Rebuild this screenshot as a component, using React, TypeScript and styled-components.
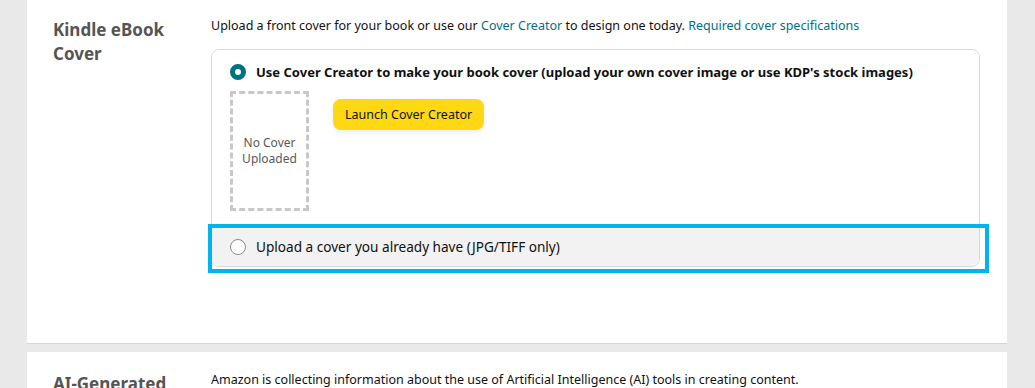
import React from 'react';
import styled, { createGlobalStyle } from 'styled-components';

const GlobalStyle = createGlobalStyle`
  html, body {
    margin: 0;
    padding: 0;
    background: #e9e9e9;
    font-family: "Noto Sans", "Open Sans", Arial, sans-serif;
    color: #0f1111;
  }
`;

const Page = styled.div`
  display: flex;
  flex-direction: column;
  gap: 8px;
  padding: 0 28px 0 27px;
  height: 388px;
  overflow: hidden;
`;

const Section = styled.section<{ $top: number; $height?: number }>`
  background: #fff;
  display: grid;
  grid-template-columns: 158px 1fr;
  padding: ${p => p.$top}px 27px 0 26px;
  border-bottom: 1px solid #d5d5d5;
  ${p => (p.$height ? `height: ${p.$height}px;` : '')}
  flex-shrink: 0;
  box-sizing: border-box;
`;

const Title = styled.h3`
  margin: 2px 0 0;
  font-size: 17px;
  line-height: 24px;
  font-weight: 700;
  color: #555;
`;

const Content = styled.div`
  display: flex;
  flex-direction: column;
`;

const Description = styled.p`
  margin: 0;
  font-size: 12.5px;
  line-height: 20px;
`;

const Link = styled.a`
  color: #007185;
  text-decoration: none;
`;

const OptionsBox = styled.div`
  margin-top: 13px;
  border: 1px solid #d5d9d9;
  border-radius: 8px;
  display: flex;
  flex-direction: column;
`;

const Option = styled.div<{ $muted?: boolean }>`
  position: relative;
  display: flex;
  flex-direction: column;
  padding: ${p => (p.$muted ? '8px 18px 9px' : '12px 18px 18px')};
  background: ${p => (p.$muted ? '#f2f2f2' : '#fff')};
  border-radius: ${p => (p.$muted ? '0 0 8px 8px' : '8px 8px 0 0')};
`;

const OptionLabel = styled.label<{ $bold?: boolean }>`
  display: flex;
  align-items: center;
  gap: 10px;
  font-size: ${p => (p.$bold ? '13px' : '13.6px')};
  line-height: 20px;
  font-weight: ${p => (p.$bold ? 700 : 400)};
`;

const Radio = styled.span<{ $checked?: boolean }>`
  width: 16px;
  height: 16px;
  box-sizing: border-box;
  border-radius: 50%;
  background: #fff;
  border: ${p => (p.$checked ? '5px solid #007185' : '1px solid #888c8c')};
  flex-shrink: 0;
`;

const CreatorRow = styled.div`
  display: flex;
  align-items: flex-start;
  gap: 24px;
  margin-top: 9px;
`;

const Placeholder = styled.div`
  width: 79px;
  height: 120px;
  box-sizing: border-box;
  border: 3px dashed #c8c8c8;
  display: flex;
  align-items: center;
  justify-content: center;
  text-align: center;
  font-size: 12px;
  line-height: 16px;
  color: #565959;
`;

const YellowButton = styled.button`
  margin-top: 8px;
  height: 31px;
  padding: 0 12px;
  background: #ffd814;
  border: none;
  border-radius: 8px;
  font-family: inherit;
  font-size: 12.5px;
  color: #0f1111;
  box-shadow: 0 2px 5px rgba(213, 217, 217, 0.5);
`;

const Highlight = styled.div`
  position: absolute;
  top: -5px;
  left: -4px;
  right: -10px;
  bottom: -7px;
  border: 4px solid #00b4f0;
  pointer-events: none;
`;

export default function App() {
  return (
    <>
      <GlobalStyle />
      <Page>
        <Section $top={16} $height={344}>
          <Title>
            Kindle eBook
            <br />
            Cover
          </Title>
          <Content>
            <Description>
              Upload a front cover for your book or use our <Link>Cover Creator</Link> to design one today.{' '}
              <Link>Required cover specifications</Link>
            </Description>
            <OptionsBox>
              <Option>
                <OptionLabel $bold>
                  <Radio $checked />
                  Use Cover Creator to make your book cover (upload your own cover image or use KDP's stock images)
                </OptionLabel>
                <CreatorRow>
                  <Placeholder>
                    No Cover
                    <br />
                    Uploaded
                  </Placeholder>
                  <YellowButton>Launch Cover Creator</YellowButton>
                </CreatorRow>
              </Option>
              <Option $muted>
                <OptionLabel>
                  <Radio />
                  Upload a cover you already have (JPG/TIFF only)
                </OptionLabel>
                <Highlight />
              </Option>
            </OptionsBox>
          </Content>
        </Section>
        <Section $top={18}>
          <Title>AI-Generated</Title>
          <Content>
            <Description>
              Amazon is collecting information about the use of Artificial Intelligence (AI) tools in creating content.
            </Description>
          </Content>
        </Section>
      </Page>
    </>
  );
}
